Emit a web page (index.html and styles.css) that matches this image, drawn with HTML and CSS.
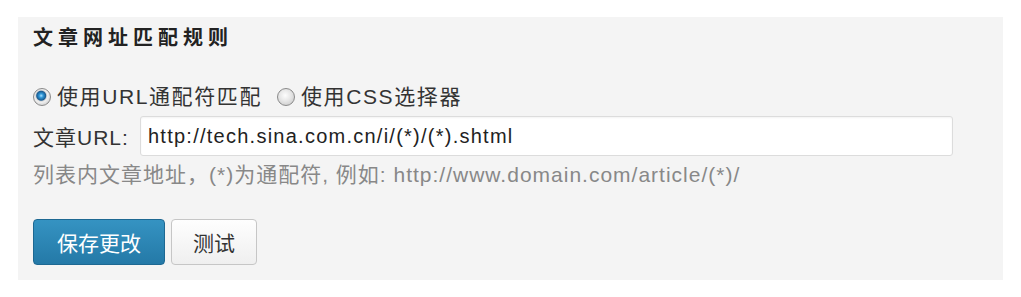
FILE: index.html
```html
<!DOCTYPE html>
<html lang="zh-CN">
<head>
    <meta charset="UTF-8">
    <title>文章网址匹配规则</title>
    <link rel="stylesheet" href="styles.css">
</head>
<body>
    <div class="panel">
        <h3 class="panel-title">文章网址匹配规则</h3>
        <div class="radio-row">
            <label class="radio"><input type="radio" name="match" checked>使用URL通配符匹配</label>
            <label class="radio"><input type="radio" name="match">使用CSS选择器</label>
        </div>
        <div class="field-row">
            <label class="field-label" for="url">文章URL:</label>
            <input class="url-input" id="url" type="text" value="http://tech.sina.com.cn/i/(*)/(*).shtml">
        </div>
        <p class="hint">列表内文章地址，(*)为通配符, 例如: http://www.domain.com/article/(*)/</p>
        <div class="actions">
            <button class="btn btn-primary">保存更改</button>
            <button class="btn">测试</button>
        </div>
    </div>
</body>
</html>
```

FILE: styles.css
```css
body {
    margin: 0;
    background: #fff;
    font-family: "Liberation Sans", "Noto Sans CJK SC", sans-serif;
    font-size: 21px;
    color: #333;
}
.panel {
    margin: 17px 18px 0;
    height: 263px;
    box-sizing: border-box;
    padding: 10px 15px 15px;
    background: #f4f4f4;
}
.panel-title {
    margin: 0;
    font-size: 20px;
    line-height: 22px;
    font-weight: bold;
    letter-spacing: 5px;
    color: #222;
}
.radio-row {
    display: flex;
    gap: 15px;
    margin-top: 37px;
    line-height: 22px;
    letter-spacing: 1.6px;
}
.radio {
    display: flex;
    align-items: center;
    cursor: pointer;
}
.radio input {
    appearance: none;
    flex: 0 0 auto;
    box-sizing: border-box;
    width: 18px;
    height: 18px;
    margin: 0 6px 0 0;
    border-radius: 50%;
    border: 1px solid #8a8a8a;
    background: radial-gradient(circle at 45% 40%, #fdfdfd 0, #e6e6e6 45%, #c2c2c2 100%);
}
.radio input:checked {
    background: radial-gradient(circle at 45% 42%, #a8e0ff 0, #3098d8 2px, #1a5c92 4.5px, #d8d8d8 5.5px, #f0f0f0 6.5px, #b8b8b8 100%);
}
.field-row {
    display: flex;
    align-items: center;
    margin-top: 8px;
    letter-spacing: 1px;
}
.field-label {
    flex: 0 0 107px;
}
.url-input {
    width: 813px;
    height: 40px;
    box-sizing: border-box;
    padding: 0 7px;
    border: 1px solid #dcdcdc;
    border-radius: 3px;
    background: #fff;
    box-shadow: inset 0 1px 2px rgba(0, 0, 0, 0.05);
    font-family: inherit;
    font-size: 20px;
    letter-spacing: 1.25px;
    color: #222;
}
.hint {
    margin: 8px 0 0;
    line-height: 22px;
    letter-spacing: 1px;
    color: #888;
}
.actions {
    display: flex;
    gap: 6px;
    margin-top: 33px;
}
.btn {
    height: 46px;
    padding: 0 21px;
    border: 1px solid #c6c6c6;
    border-radius: 4px;
    background: linear-gradient(#fefefe, #efefef);
    font-family: inherit;
    font-size: 21px;
    color: #333;
    cursor: pointer;
}
.btn-primary {
    padding: 0 23px;
    border-color: #1d6892;
    background: linear-gradient(#3593c2, #2479a7);
    color: #fff;
}
```
